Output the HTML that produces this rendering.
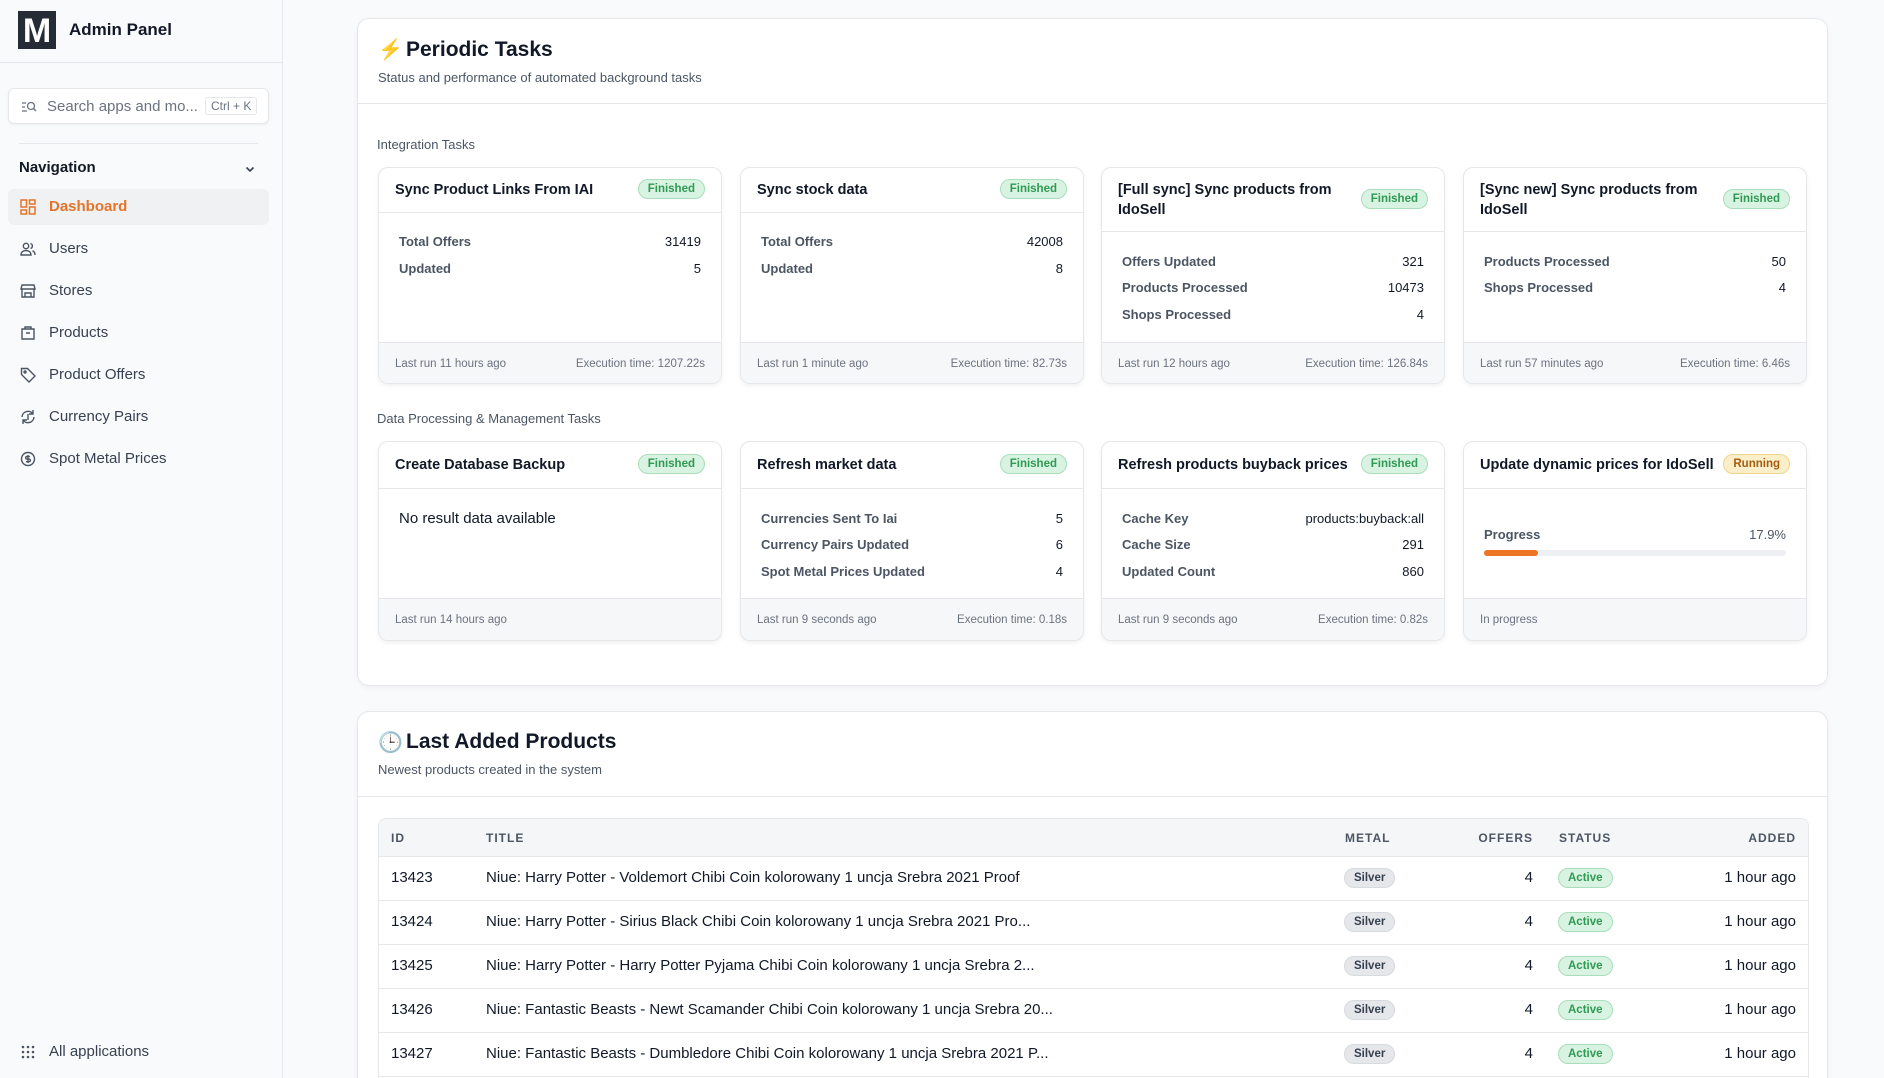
<!DOCTYPE html>
<html><head><meta charset="utf-8"><style>
*{box-sizing:border-box;margin:0;padding:0}
html{width:1884px;height:1078px;overflow:hidden}
body{width:1884px;height:1078px;overflow:hidden;background:#f9fafb;font-family:"Liberation Sans",sans-serif;color:#111827;position:relative}
.sb{position:absolute;left:0;top:0;width:283px;height:1078px;background:#f9fafb;border-right:1px solid #e5e7eb}
.logo{position:absolute;left:18px;top:11px;width:38px;height:38px;background:#262c36;color:#fff;font-weight:bold;font-size:34px;text-align:center;line-height:40px}
.brand{position:absolute;left:69px;top:20px;font-size:17px;font-weight:600}
.hl{position:absolute;left:0;top:62px;width:283px;border-top:1px solid #e5e7eb}
.search{position:absolute;left:8px;top:88px;width:261px;height:36px;background:#fff;border:1px solid #e5e7eb;border-radius:6px;box-shadow:0 1px 2px rgba(0,0,0,.05)}
.search .t{position:absolute;left:38px;top:9px;font-size:15px;color:#6b7280}
.search .k{position:absolute;left:196px;top:8px;font-size:12px;color:#6b7280;border:1px solid #e5e7eb;padding:1px 5px;border-radius:3px}
.dv{position:absolute;left:19px;top:143px;width:239px;border-top:1px solid #e5e7eb}
.navh{position:absolute;left:19px;top:159px;font-size:15px;font-weight:600}
.nav{position:absolute;left:8px;width:261px;height:36px;font-size:15px;color:#374151;border-radius:6px}
.nav span{position:absolute;left:41px;top:9px}
.nav svg{position:absolute;left:12px;top:10px}
.nav.act{background:#f0f1f3;color:#e5742b;font-weight:600}
.main{position:absolute;background:#fff;border:1px solid #e5e7eb;border-radius:12px;box-shadow:0 2px 6px rgba(0,0,0,.04)}
.h1{position:absolute;left:48px;font-size:21px;font-weight:bold}
.ic{position:absolute;left:20px;font-size:20px}
.sub{position:absolute;left:20px;font-size:13px;color:#4b5563}
.sec{position:absolute;font-size:13px;color:#4b5563;left:377px}
.card{position:absolute;width:344px;background:#fff;border:1px solid #e5e7eb;border-radius:10px;box-shadow:0 2px 5px rgba(0,0,0,.06);overflow:hidden}
.ch{position:absolute;left:0;top:0;right:0;border-bottom:1px solid #e5e7eb}
.ct{position:absolute;left:16px;font-size:14.5px;font-weight:600;line-height:20px;width:230px}
.b{position:absolute;font-size:11.5px;font-weight:600;border-radius:12px;padding:3px 9px;border:1px solid}
.fin{background:#d8f3e1;color:#2f9a53;border-color:#a9ddbb}
.run{background:#fbefc9;color:#a65c10;border-color:#efd48c}
.row{position:absolute;left:20px;right:20px;font-size:13px;display:flex;justify-content:space-between}
.row .l{color:#4b5563;font-weight:600}.row .v{color:#111827;font-weight:500}
.ft{position:absolute;left:0;right:0;bottom:0;background:#f6f7f9;border-top:1px solid #e5e7eb;font-size:11.5px;color:#6b7280}
.ft .a{position:absolute;left:16px;top:15px}.ft .e{position:absolute;right:16px;top:15px}
.tbl{position:absolute;left:378px;top:818px;width:1431px;height:300px;border:1px solid #e5e7eb;border-radius:8px;overflow:hidden}
.th{position:absolute;top:0;left:0;right:0;height:38px;background:#f5f6f8;border-bottom:1px solid #e5e7eb;font-size:12px;letter-spacing:1px;color:#4b5563;font-weight:600}
.th span,.tr span{position:absolute}
.th span{top:12px}
.tr{position:absolute;left:0;right:0;height:44px;border-bottom:1px solid #e5e7eb;font-size:15px}
.tr span{top:12px}
.sil{background:#e5e7eb;color:#374151;font-size:11.5px;font-weight:600;border-radius:11px;padding:3px 9px;border:1px solid #d7dade;top:11px!important}
.actb{background:#d8f3e1;color:#2f9a53;font-size:11.5px;font-weight:600;border-radius:11px;padding:3px 9px;border:1px solid #a9ddbb;top:11px!important}
</style></head><body>
<div class="sb">
<div class="logo">M</div><div class="brand">Admin Panel</div><div class="hl"></div>
<div class="search"><svg style="position:absolute;left:12px;top:11px" width="16" height="14" viewBox="0 0 16 14" fill="none" stroke="#6b7280" stroke-width="1.3"><path d="M1 3h4M1 7h3M1 11h5"/><circle cx="10" cy="6" r="3.5"/><path d="M12.5 8.5l2.5 2.5"/></svg><div class="t">Search apps and mo...</div><div class="k">Ctrl + K</div></div>
<div class="dv"></div>
<div class="navh">Navigation</div>
<svg style="position:absolute;left:244px;top:163px" width="12" height="12" viewBox="0 0 12 12" fill="none" stroke="#374151" stroke-width="1.6"><path d="M2.5 4.5L6 8l3.5-3.5"/></svg>
<div class="nav act" style="top:189px"><svg width="16" height="16" viewBox="0 0 16 16" fill="none" stroke="#e5742b" stroke-width="1.5"><rect x="1" y="1" width="5.5" height="7"/><rect x="9.5" y="1" width="5.5" height="4"/><rect x="1" y="11" width="5.5" height="4"/><rect x="9.5" y="8" width="5.5" height="7"/></svg><span>Dashboard</span></div>
<div class="nav" style="top:231px"><svg width="16" height="16" viewBox="0 0 16 16" fill="none" stroke="#4b5563" stroke-width="1.4"><circle cx="6" cy="5" r="2.7"/><path d="M1 14c0-3 2.2-4.5 5-4.5s5 1.5 5 4.5zM10.5 2.5a2.6 2.6 0 010 5M12.5 9.8c1.5.6 2.5 2 2.5 4.2"/></svg><span>Users</span></div>
<div class="nav" style="top:273px"><svg width="16" height="16" viewBox="0 0 16 16" fill="none" stroke="#4b5563" stroke-width="1.4"><path d="M2 2h12l1 4H1zM2 6v8h12V6M5 14v-4h6v4"/></svg><span>Stores</span></div>
<div class="nav" style="top:315px"><svg width="16" height="16" viewBox="0 0 16 16" fill="none" stroke="#4b5563" stroke-width="1.4"><path d="M2 4h12v10H2zM5 4V2h6v2M6 8h4"/></svg><span>Products</span></div>
<div class="nav" style="top:357px"><svg width="16" height="16" viewBox="0 0 16 16" fill="none" stroke="#4b5563" stroke-width="1.4"><path d="M1.5 2v5.5L9 15l6-6-7.5-7.5H1.5z"/><circle cx="5" cy="5" r="1"/></svg><span>Product Offers</span></div>
<div class="nav" style="top:399px"><svg width="16" height="16" viewBox="0 0 16 16" fill="none" stroke="#4b5563" stroke-width="1.4"><path d="M2 8a6 6 0 0111-3M14 8a6 6 0 01-11 3M13 1v4H9M3 15v-4h4"/><path d="M8 5v6"/></svg><span>Currency Pairs</span></div>
<div class="nav" style="top:441px"><svg width="16" height="16" viewBox="0 0 16 16" fill="none" stroke="#4b5563" stroke-width="1.4"><circle cx="8" cy="8" r="6.5"/><path d="M10 5.5H7a1.3 1.3 0 000 2.6h2a1.3 1.3 0 010 2.6H6M8 4v8"/></svg><span>Spot Metal Prices</span></div>
<div class="nav" style="top:1034px"><svg width="16" height="16" viewBox="0 0 16 16" fill="#4b5563"><circle cx="3" cy="3" r="1.3"/><circle cx="8" cy="3" r="1.3"/><circle cx="13" cy="3" r="1.3"/><circle cx="3" cy="8" r="1.3"/><circle cx="8" cy="8" r="1.3"/><circle cx="13" cy="8" r="1.3"/><circle cx="3" cy="13" r="1.3"/><circle cx="8" cy="13" r="1.3"/><circle cx="13" cy="13" r="1.3"/></svg><span>All applications</span></div>
</div>

<div class="main" style="left:357px;top:18px;width:1471px;height:668px">
<div class="ic" style="top:18px;color:#f5b50c">⚡</div><div class="h1" style="top:19px">Periodic Tasks</div>
<div class="sub" style="top:51px">Status and performance of automated background tasks</div>
<div style="position:absolute;left:0;right:0;top:84px;border-top:1px solid #e5e7eb"></div>
</div>
<div class="sec" style="top:137px">Integration Tasks</div>
<div class="sec" style="top:411px">Data Processing &amp; Management Tasks</div>

<div class="card" style="left:378px;top:167px;height:217px"><div class="ch" style="height:45px"><div class="ct" style="top:12px">Sync Product Links From IAI</div><span class="b fin" style="right:16px;top:11px">Finished</span></div>
<div class="row" style="top:66px"><span class="l">Total Offers</span><span class="v">31419</span></div><div class="row" style="top:93px"><span class="l">Updated</span><span class="v">5</span></div>
<div class="ft" style="height:41px"><span class="a">Last run 11 hours ago</span><span class="e">Execution time: 1207.22s</span></div></div>

<div class="card" style="left:740px;top:167px;height:217px"><div class="ch" style="height:45px"><div class="ct" style="top:12px">Sync stock data</div><span class="b fin" style="right:16px;top:11px">Finished</span></div>
<div class="row" style="top:66px"><span class="l">Total Offers</span><span class="v">42008</span></div><div class="row" style="top:93px"><span class="l">Updated</span><span class="v">8</span></div>
<div class="ft" style="height:41px"><span class="a">Last run 1 minute ago</span><span class="e">Execution time: 82.73s</span></div></div>

<div class="card" style="left:1101px;top:167px;height:217px"><div class="ch" style="height:64px"><div class="ct" style="top:12px">[Full sync] Sync products from IdoSell</div><span class="b fin" style="right:16px;top:21px">Finished</span></div>
<div class="row" style="top:86px"><span class="l">Offers Updated</span><span class="v">321</span></div><div class="row" style="top:112px"><span class="l">Products Processed</span><span class="v">10473</span></div><div class="row" style="top:139px"><span class="l">Shops Processed</span><span class="v">4</span></div>
<div class="ft" style="height:41px"><span class="a">Last run 12 hours ago</span><span class="e">Execution time: 126.84s</span></div></div>

<div class="card" style="left:1463px;top:167px;height:217px"><div class="ch" style="height:64px"><div class="ct" style="top:12px">[Sync new] Sync products from IdoSell</div><span class="b fin" style="right:16px;top:21px">Finished</span></div>
<div class="row" style="top:86px"><span class="l">Products Processed</span><span class="v">50</span></div><div class="row" style="top:112px"><span class="l">Shops Processed</span><span class="v">4</span></div>
<div class="ft" style="height:41px"><span class="a">Last run 57 minutes ago</span><span class="e">Execution time: 6.46s</span></div></div>

<div class="card" style="left:378px;top:441px;height:200px"><div class="ch" style="height:47px"><div class="ct" style="top:13px">Create Database Backup</div><span class="b fin" style="right:16px;top:12px">Finished</span></div>
<div class="row" style="top:68px;font-size:15px"><span class="v">No result data available</span></div>
<div class="ft" style="height:42px"><span class="a">Last run 14 hours ago</span></div></div>

<div class="card" style="left:740px;top:441px;height:200px"><div class="ch" style="height:47px"><div class="ct" style="top:13px">Refresh market data</div><span class="b fin" style="right:16px;top:12px">Finished</span></div>
<div class="row" style="top:69px"><span class="l">Currencies Sent To Iai</span><span class="v">5</span></div><div class="row" style="top:95px"><span class="l">Currency Pairs Updated</span><span class="v">6</span></div><div class="row" style="top:122px"><span class="l">Spot Metal Prices Updated</span><span class="v">4</span></div>
<div class="ft" style="height:42px"><span class="a">Last run 9 seconds ago</span><span class="e">Execution time: 0.18s</span></div></div>

<div class="card" style="left:1101px;top:441px;height:200px"><div class="ch" style="height:47px"><div class="ct" style="top:13px;width:260px">Refresh products buyback prices</div><span class="b fin" style="right:16px;top:12px">Finished</span></div>
<div class="row" style="top:69px"><span class="l">Cache Key</span><span class="v">products:buyback:all</span></div><div class="row" style="top:95px"><span class="l">Cache Size</span><span class="v">291</span></div><div class="row" style="top:122px"><span class="l">Updated Count</span><span class="v">860</span></div>
<div class="ft" style="height:42px"><span class="a">Last run 9 seconds ago</span><span class="e">Execution time: 0.82s</span></div></div>

<div class="card" style="left:1463px;top:441px;height:200px"><div class="ch" style="height:47px"><div class="ct" style="top:13px;width:260px">Update dynamic prices for IdoSell</div><span class="b run" style="right:16px;top:12px">Running</span></div>
<div class="row" style="top:85px"><span class="l">Progress</span><span class="v" style="color:#4b5563">17.9%</span></div>
<div style="position:absolute;left:20px;right:20px;top:108px;height:6px;background:#eef0f3;border-radius:3px"><div style="width:17.9%;height:6px;background:#ec7424;border-radius:3px"></div></div>
<div class="ft" style="height:42px"><span class="a">In progress</span></div></div>

<div class="main" style="left:357px;top:711px;width:1471px;height:420px">
<div class="ic" style="top:18px;color:#9ca3af">🕒</div><div class="h1" style="top:18px">Last Added Products</div>
<div class="sub" style="top:50px">Newest products created in the system</div>
<div style="position:absolute;left:0;right:0;top:84px;border-top:1px solid #e5e7eb"></div>
</div>
<div class="tbl">
<div class="th"><span style="left:12px">ID</span><span style="left:107px">TITLE</span><span style="left:966px">METAL</span><span style="right:275px">OFFERS</span><span style="left:1180px">STATUS</span><span style="right:12px">ADDED</span></div>
<div class="tr" style="top:38px"><span style="left:12px">13423</span><span style="left:107px">Niue: Harry Potter - Voldemort Chibi Coin kolorowany 1 uncja Srebra 2021 Proof</span><span class="sil" style="left:965px">Silver</span><span style="right:275px">4</span><span class="actb" style="left:1179px">Active</span><span style="right:12px">1 hour ago</span></div>
<div class="tr" style="top:82px"><span style="left:12px">13424</span><span style="left:107px">Niue: Harry Potter - Sirius Black Chibi Coin kolorowany 1 uncja Srebra 2021 Pro...</span><span class="sil" style="left:965px">Silver</span><span style="right:275px">4</span><span class="actb" style="left:1179px">Active</span><span style="right:12px">1 hour ago</span></div>
<div class="tr" style="top:126px"><span style="left:12px">13425</span><span style="left:107px">Niue: Harry Potter - Harry Potter Pyjama Chibi Coin kolorowany 1 uncja Srebra 2...</span><span class="sil" style="left:965px">Silver</span><span style="right:275px">4</span><span class="actb" style="left:1179px">Active</span><span style="right:12px">1 hour ago</span></div>
<div class="tr" style="top:170px"><span style="left:12px">13426</span><span style="left:107px">Niue: Fantastic Beasts - Newt Scamander Chibi Coin kolorowany 1 uncja Srebra 20...</span><span class="sil" style="left:965px">Silver</span><span style="right:275px">4</span><span class="actb" style="left:1179px">Active</span><span style="right:12px">1 hour ago</span></div>
<div class="tr" style="top:214px"><span style="left:12px">13427</span><span style="left:107px">Niue: Fantastic Beasts - Dumbledore Chibi Coin kolorowany 1 uncja Srebra 2021 P...</span><span class="sil" style="left:965px">Silver</span><span style="right:275px">4</span><span class="actb" style="left:1179px">Active</span><span style="right:12px">1 hour ago</span></div>
</div>
</body></html>
